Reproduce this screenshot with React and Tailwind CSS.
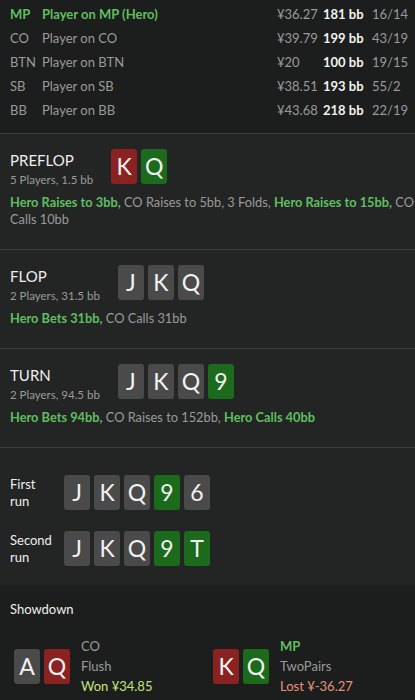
const players = [
  { pos: "MP", name: "Player on MP (Hero)", amount: "¥36.27", bb: "181 bb", stats: "16/14", hero: true },
  { pos: "CO", name: "Player on CO", amount: "¥39.79", bb: "199 bb", stats: "43/19" },
  { pos: "BTN", name: "Player on BTN", amount: "¥20", bb: "100 bb", stats: "19/15" },
  { pos: "SB", name: "Player on SB", amount: "¥38.51", bb: "193 bb", stats: "55/2" },
  { pos: "BB", name: "Player on BB", amount: "¥43.68", bb: "218 bb", stats: "22/19" },
];

function Card({ rank, color = "gray" }) {
  const bg =
    color === "red" ? "bg-[#8a2222]" : color === "green" ? "bg-[#1c6a1c]" : "bg-[#4a4a4a]";
  return (
    <div
      className={`${bg} w-[26px] h-[35px] rounded-[3px] flex items-center justify-center text-[23px] leading-none text-[#f2f2f2]`}
    >
      {rank}
    </div>
  );
}

function Cards({ cards }) {
  return (
    <div className="flex gap-[4px]">
      {cards.map(([r, c], i) => (
        <Card key={i} rank={r} color={c} />
      ))}
    </div>
  );
}

function Street({ title, sub, cards, actions }) {
  return (
    <div className="border-t border-[#3a3c3b] bg-[#232524] pl-[10px] pt-[15px] pb-[21px]">
      <div className="flex items-start gap-[18px]">
        <div className="mt-[1px]">
          <div className="text-[15px] leading-[21px] text-[#eeeeee]">{title}</div>
          <div className="text-[11.5px] leading-[17px] text-[#9a9a9a]">{sub}</div>
        </div>
        <Cards cards={cards} />
      </div>
      <p className="mt-[6px] text-[12.8px] leading-[17px] text-[#9a9a9a]">
        {actions.map(([t, hero], i) =>
          hero ? (
            <span key={i} className="font-bold text-[#5fbf5f]">
              {t}
            </span>
          ) : (
            <span key={i}>{t}</span>
          )
        )}
      </p>
    </div>
  );
}

function Run({ label, cards }) {
  return (
    <div className="flex items-center">
      <div className="w-[54px] text-[13px] leading-[17px] text-[#eeeeee]">
        {label[0]}
        <br />
        {label[1]}
      </div>
      <Cards cards={cards} />
    </div>
  );
}

function Hand({ cards, pos, hero, hand, result, won }) {
  return (
    <div className="flex items-center gap-[11px]">
      <Cards cards={cards} />
      <div className="text-[13px] leading-[20px]">
        <div className={hero ? "font-bold text-[#5fbf5f]" : "text-[#9a9a9a]"}>{pos}</div>
        <div className="text-[#9a9a9a]">{hand}</div>
        <div className={won ? "text-[#c4e27e]" : "text-[#e8907c]"}>{result}</div>
      </div>
    </div>
  );
}

export default function App() {
  return (
    <div className="w-[415px] min-h-[700px] bg-[#1c1e1d] font-['Lato','Noto_Sans',sans-serif]">
      {/* players */}
      <div className="pt-[3px] pb-[10px] px-[10px]">
        {players.map((p) => (
          <div key={p.pos} className="flex items-center h-[24px] text-[13px]">
            <div className={`w-[32px] ${p.hero ? "font-bold text-[#5fbf5f]" : "text-[#9a9a9a]"}`}>
              {p.pos}
            </div>
            <div className={`flex-1 ${p.hero ? "font-bold text-[#5fbf5f]" : "text-[#9a9a9a]"}`}>
              {p.name}
            </div>
            <div className="w-[46px] text-[#9a9a9a]">{p.amount}</div>
            <div className="w-[49px] font-bold text-[#f2f2f2]">{p.bb}</div>
            <div className="w-[33px] text-[#9a9a9a]">{p.stats}</div>
          </div>
        ))}
      </div>

      <Street
        title="PREFLOP"
        sub="5 Players, 1.5 bb"
        cards={[["K", "red"], ["Q", "green"]]}
        actions={[
          ["Hero Raises to 3bb,", true],
          [" CO Raises to 5bb, 3 Folds, ", false],
          ["Hero Raises to 15bb,", true],
          [" CO Calls 10bb", false],
        ]}
      />
      <Street
        title="FLOP"
        sub="2 Players, 31.5 bb"
        cards={[["J"], ["K"], ["Q"]]}
        actions={[
          ["Hero Bets 31bb,", true],
          [" CO Calls 31bb", false],
        ]}
      />
      <Street
        title="TURN"
        sub="2 Players, 94.5 bb"
        cards={[["J"], ["K"], ["Q"], ["9", "green"]]}
        actions={[
          ["Hero Bets 94bb,", true],
          [" CO Raises to 152bb, ", false],
          ["Hero Calls 40bb", true],
        ]}
      />

      {/* runs */}
      <div className="border-t border-[#3a3c3b] bg-[#232524] px-[10px] pt-[27px] pb-[19px] flex flex-col gap-[21px]">
        <Run label={["First", "run"]} cards={[["J"], ["K"], ["Q"], ["9", "green"], ["6"]]} />
        <Run label={["Second", "run"]} cards={[["J"], ["K"], ["Q"], ["9", "green"], ["T", "green"]]} />
      </div>

      {/* showdown */}
      <div className="bg-[#1c1e1d] pt-[16px] pb-[4px]">
        <div className="px-[10px] text-[13px] leading-[17px] text-[#eeeeee]">Showdown</div>
        <div className="mt-[18px] pl-[14px] grid grid-cols-[199px_1fr]">
          <Hand cards={[["A"], ["Q", "red"]]} pos="CO" hand="Flush" result="Won ¥34.85" won />
          <Hand cards={[["K", "red"], ["Q", "green"]]} pos="MP" hero hand="TwoPairs" result="Lost ¥-36.27" />
        </div>
      </div>
    </div>
  );
}
